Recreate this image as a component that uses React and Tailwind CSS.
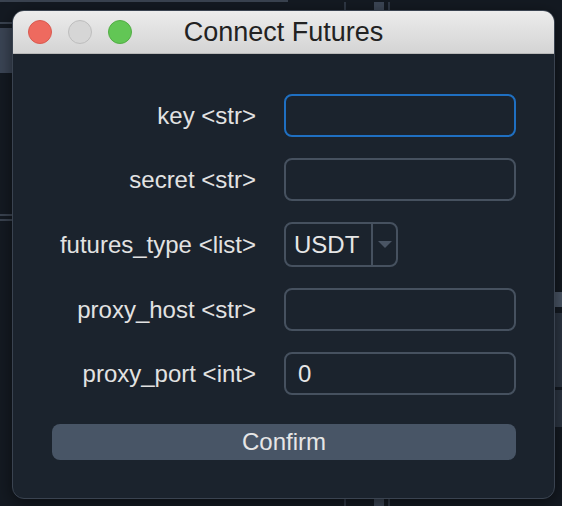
import React from 'react'

const fields = [
  { label: 'key <str>', value: '', focused: true },
  { label: 'secret <str>', value: '' },
  { label: 'futures_type <list>', select: 'USDT' },
  { label: 'proxy_host <str>', value: '' },
  { label: 'proxy_port <int>', value: '0' },
]

function Input({ value, focused }) {
  return (
    <div
      className={`h-[43px] w-[232px] rounded-[8px] border-2 px-3 flex items-center text-[24px] text-[#e6e6e6] bg-[#1b232d] ${
        focused ? 'border-[#1f6fc1]' : 'border-[#46515f]'
      }`}
    >
      {value}
    </div>
  )
}

function Select({ value }) {
  return (
    <div className="h-[45px] w-[114px] rounded-[8px] border-2 border-[#46515f] flex items-stretch text-[24px] text-[#e6e6e6]">
      <div className="w-[85px] flex items-center pl-[8px]">{value}</div>
      <div className="w-[2px] bg-[#46515f]" />
      <div className="flex-1 flex items-center justify-center">
        <svg width="14" height="7" viewBox="0 0 14 7">
          <path d="M0 0 H14 L7 7 Z" fill="#4a5564" />
        </svg>
      </div>
    </div>
  )
}

// the main app that sits behind the dialog
function Backdrop() {
  return (
    <div className="w-full h-full flex flex-col">
      <div className="w-[288px] h-[2px] shrink-0 bg-[#3a4350]" />
      <div className="flex-1 flex">
        <div className="w-[14px] flex flex-col pt-[20px]">
          <div className="h-[2px] bg-[#3a4350]" />
          <div className="mt-[4px] h-[45px] bg-[#3b4555]" />
          <div className="mt-[141px] h-[2px] bg-[#3a4350]" />
          <div className="mt-[3px] h-[2px] bg-[#3a4350]" />
        </div>
        <div className="ml-[330px] w-[2px] bg-[#2e3744]" />
        <div className="ml-[28px] w-[10px] bg-[#3c4655]" />
        <div className="ml-[4px] w-[2px] bg-[#2e3744]" />
        <div className="ml-auto w-[8px] flex flex-col pt-[290px]">
          <div className="h-[15px] bg-[#4a5666]" />
          <div className="mt-[6px] h-[74px] bg-[#2c3542]" />
          <div className="mt-[3px] h-[37px] bg-[#2c3542]" />
        </div>
      </div>
    </div>
  )
}

export default function App() {
  return (
    <div
      className="relative w-[562px] h-[506px] overflow-hidden bg-[#141a22]"
      style={{ fontFamily: '"Liberation Sans", Arial, sans-serif' }}
    >
      <Backdrop />

      {/* dialog window */}
      <div className="absolute left-[12px] top-[10px] w-[543px] h-[489px] rounded-[12px] border border-[#3a4350] bg-[#1b232d] overflow-hidden flex flex-col shadow-[0_4px_16px_rgba(0,0,0,0.5)]">
        <div className="h-[43px] shrink-0 bg-gradient-to-b from-[#ececec] to-[#d4d4d4] border-b border-[#b8b8b8] grid grid-cols-[1fr_auto_1fr] items-center">
          <div className="pl-[15px] flex gap-[16px]">
            <span className="w-[24px] h-[24px] rounded-full bg-[#ee6a5f] border border-[#d85a50]" />
            <span className="w-[24px] h-[24px] rounded-full bg-[#d6d6d6] border border-[#bdbdbd]" />
            <span className="w-[24px] h-[24px] rounded-full bg-[#62c655] border border-[#52ad45]" />
          </div>
          <span className="text-[27px] text-[#222222]">Connect Futures</span>
          <div />
        </div>

        <div className="flex-1 pt-[40px] pl-[39px] pr-[38px]">
          <div className="grid grid-cols-[1fr_232px] gap-x-[28px] gap-y-[21px] items-center">
            {fields.map((f) => (
              <React.Fragment key={f.label}>
                <div className="text-right text-[24px] text-[#e2e2e2] whitespace-nowrap">{f.label}</div>
                {f.select ? <Select value={f.select} /> : <Input value={f.value} focused={f.focused} />}
              </React.Fragment>
            ))}
          </div>
          <button className="mt-[29px] w-full h-[36px] rounded-[8px] bg-[#485566] text-[24px] text-[#e6e6e6] flex items-center justify-center">
            Confirm
          </button>
        </div>
      </div>
    </div>
  )
}
